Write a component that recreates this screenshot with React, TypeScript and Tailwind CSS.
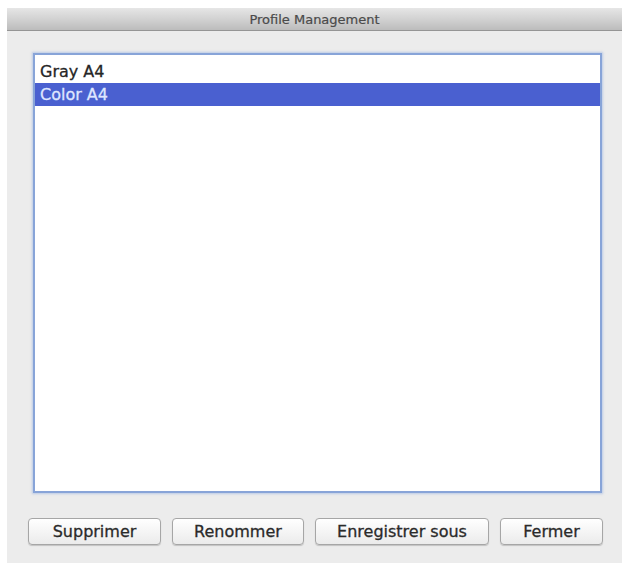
import React from "react";

const font = { fontFamily: '"DejaVu Sans", "Liberation Sans", sans-serif' };

export default function App() {
  const buttons = [
    { label: "Supprimer", w: "w-[133px]" },
    { label: "Renommer", w: "w-[132px]" },
    { label: "Enregistrer sous", w: "w-[174px]" },
    { label: "Fermer", w: "w-[103px]" },
  ];
  return (
    <div className="w-[626px] h-[565px] bg-white pt-[8px] pl-[7px]" style={font}>
      <div className="w-[615px] h-[555px] bg-[#ececec] flex flex-col">
        <div className="h-[23px] flex items-center justify-center bg-gradient-to-b from-[#e6e6e6] via-[#d2d2d2] to-[#bcbcbc] border-b border-[#959595]">
          <span className="text-[13px] text-[#4a4a4a] leading-none [-webkit-text-stroke:0.2px_#4a4a4a]">Profile Management</span>
        </div>
        <div className="pl-[26px] pt-[22px]">
          <div className="w-[569px] h-[440px] bg-white border-2 border-[#88a4d8] shadow-[0_0_2px_1px_rgba(140,170,225,0.5)] pt-[5px]">
            <div className="h-[23px] flex items-center pl-[5px] text-[16px] text-[#262626] [-webkit-text-stroke:0.3px_#262626]">Gray A4</div>
            <div className="h-[23px] flex items-center pl-[5px] text-[16px] text-[#dfe6ff] bg-[#4a60d0] [-webkit-text-stroke:0.3px_#dfe6ff]">Color A4</div>
          </div>
        </div>
        <div className="flex gap-[11px] pl-[21px] pt-[25px]">
          {buttons.map((b) => (
            <div
              key={b.label}
              className={`${b.w} h-[27px] flex items-center justify-center rounded-[4px] border border-[#a6a6a6] bg-gradient-to-b from-[#ffffff] to-[#ebebeb] shadow-[0_1px_1px_rgba(0,0,0,0.18)] text-[16px] text-[#2a2a2a] [-webkit-text-stroke:0.3px_#2a2a2a]`}
            >
              {b.label}
            </div>
          ))}
        </div>
      </div>
    </div>
  );
}
